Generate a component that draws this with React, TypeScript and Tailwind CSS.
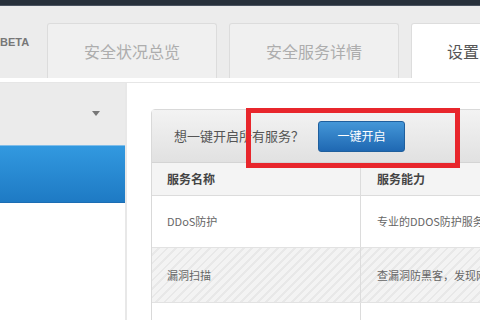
const FONT = "font-['Microsoft_YaHei','Noto_Sans_CJK_SC',sans-serif]";

const TABS = [
  { label: "安全状况总览", active: false },
  { label: "安全服务详情", active: false },
  { label: "设置", active: true },
];

const ROWS = [
  { name: "DDoS防护", desc: "专业的DDOS防护服务", striped: false, h: "h-[52px]" },
  { name: "漏洞扫描", desc: "查漏洞防黑客，发现网站风险", striped: true, h: "h-[55px]" },
  { name: "", desc: "", striped: false, h: "h-[40px]" },
];

export default function App() {
  return (
    <div className={`relative h-[320px] w-[480px] overflow-hidden bg-white ${FONT}`}>
      {/* top dark strip */}
      <div className="h-[6px] border-b border-[#4a5360] bg-[#27303b]" />

      {/* tab band */}
      <div className="flex h-[72px] items-end overflow-hidden bg-[#ececec]">
        <div className="flex h-full w-[47px] shrink-0 items-start pt-[28px]">
          <span className="text-[11px] font-bold text-[#777] font-['Liberation_Sans',sans-serif]">
            BETA
          </span>
        </div>
        <div className="flex shrink-0 gap-[12px]">
          {TABS.map((t) => (
            <div
              key={t.label}
              className={
                t.active
                  ? "flex h-[55px] w-[170px] shrink-0 items-center rounded-t-[3px] border border-b-0 border-[#dddddd] bg-white pl-[35px] text-[16px] text-[#555]"
                  : "flex h-[55px] w-[170px] shrink-0 items-center justify-center rounded-t-[3px] border border-b-0 border-[#dcdcdc] bg-[#f0f0f0] text-[16px] text-[#adadad]"
              }
            >
              {t.label}
            </div>
          ))}
        </div>
      </div>

      {/* white strip */}
      <div className="h-[5px] border-b border-[#e6e6e6] bg-white" />

      <div className="flex">
        {/* sidebar */}
        <div className="flex h-[240px] w-[127px] shrink-0 flex-col border-r-2 border-[#e8e8e8]">
          <div className="flex h-[62px] items-center justify-end bg-[#ebebeb] pr-[25px]">
            <span className="mt-[-2px] h-0 w-0 border-x-[4px] border-t-[5px] border-x-transparent border-t-[#777]" />
          </div>
          <div className="h-[58px] border-y border-y-[#1c6db3] border-t-[#7fbde9] bg-gradient-to-b from-[#3299e0] to-[#1e7ac4]" />
          <div className="flex-1 bg-white" />
        </div>

        {/* content */}
        <div className="min-w-0 flex-1 pl-[24px] pt-[26px]">
          <div className="w-[360px] rounded-tl-[4px] border border-[#d9d9d9]">
            <div className="flex h-[53px] items-center gap-[14px] border-b border-[#d4d4d4] bg-gradient-to-b from-[#f3f3f3] to-[#e1e1e1] pl-[22px]">
              <span className="text-[13px] text-[#555]">想一键开启所有服务？</span>
              <button
                type="button"
                className="flex h-[31px] w-[87px] shrink-0 items-center justify-center rounded-[3px] border border-[#1f5f9d] bg-gradient-to-b from-[#4497d8] to-[#1f68b2] text-[12px] text-white"
              >
                一键开启
              </button>
            </div>
            <div className="flex h-[33px] border-b border-[#dcdcdc] bg-[#f4f4f4] text-[12px] font-bold text-[#444]">
              <div className="flex w-[209px] shrink-0 items-center border-r border-[#dcdcdc] pl-[15px]">服务名称</div>
              <div className="flex min-w-0 flex-1 items-center pl-[16px]">服务能力</div>
            </div>
            {ROWS.map((r, i) => (
              <div
                key={i}
                className={`flex ${r.h} border-b border-[#e2e2e2] text-[11px] text-[#666] ${
                  r.striped
                    ? "bg-[repeating-linear-gradient(135deg,#f3f3f3_0px,#f3f3f3_4px,#e8e8e8_4px,#e8e8e8_6px)]"
                    : "bg-white"
                }`}
              >
                <div className="flex w-[209px] shrink-0 items-center border-r border-[#dcdcdc] pl-[15px]">{r.name}</div>
                <div className="flex min-w-0 flex-1 items-center overflow-hidden whitespace-nowrap pl-[16px]">{r.desc}</div>
              </div>
            ))}
          </div>
        </div>
      </div>

      {/* red highlight box */}
      <div className="absolute left-[246px] top-[108px] h-[60px] w-[214px] border-[5px] border-[#e8262c]" />
    </div>
  );
}
